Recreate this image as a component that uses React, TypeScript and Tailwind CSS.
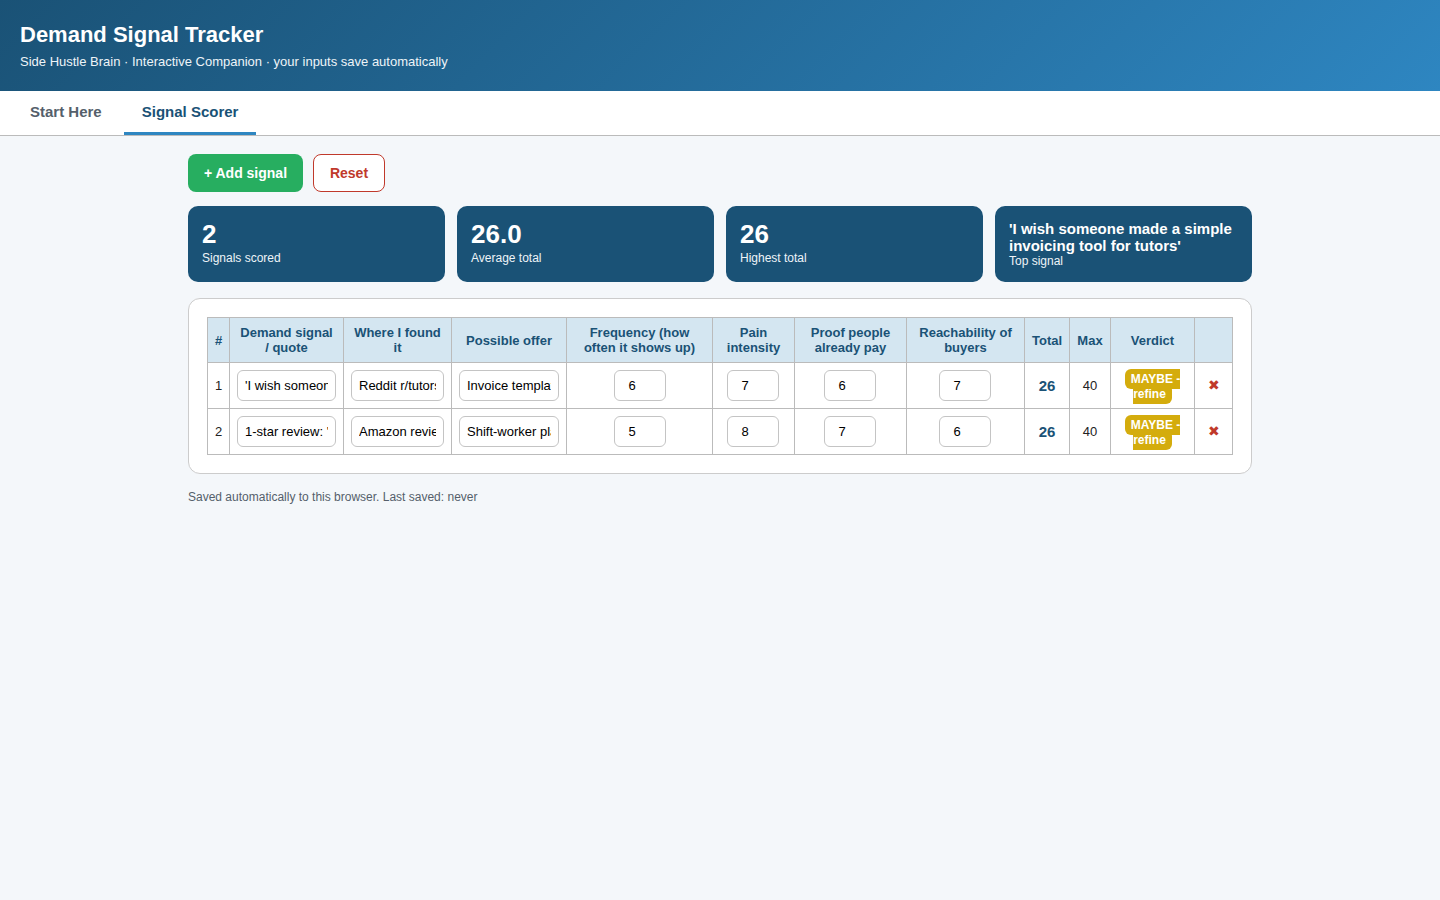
import React, { useState } from 'react';

const rows = [
  { id: 1, signal: "'I wish someone made a simple invoicing tool for tutors'", where: 'Reddit r/tutors', offer: 'Invoice template pack', freq: 6, pain: 7, proof: 6, reach: 7 },
  { id: 2, signal: "1-star review: 'Nothing works with rotating shifts'", where: 'Amazon reviews', offer: 'Shift-worker planner', freq: 5, pain: 8, proof: 7, reach: 6 },
];

const th = 'border border-[#bbbbbb] bg-[#d4e6f1] px-[7px] py-[7px] text-center align-middle text-[13px] font-bold leading-[15px] text-[#1a5276]';
const cell = 'border border-[#bbbbbb] text-center align-middle leading-[15px]';
const td = `${cell} px-[7px] py-[7px] text-[13px]`;
const tdNudged = `${cell} py-[7px] pl-[6px] pr-[8px] text-[13px]`;
const textInput = 'block h-[31px] w-full rounded-md border border-[#c4c4c4] bg-white px-[7px] text-[13px] text-black';
const numInput = 'mx-auto block h-[31px] w-[52px] rounded-md border border-[#c4c4c4] bg-white px-2 text-center text-[13px] text-black';

function Stat({ value, label, small }: { value: string; label: string; small?: boolean }) {
  return (
    <div className="h-[76px] rounded-[10px] bg-[#1a5276] px-3.5 pt-3.5 text-white">
      <div className={small ? 'text-[15px] font-bold leading-[17px]' : 'mb-[3px] text-[26px] font-bold leading-[28px]'}>{value}</div>
      <div className="text-xs leading-[14px] text-[#eef4f8]">{label}</div>
    </div>
  );
}

export default function App() {
  const [tab, setTab] = useState<'start' | 'scorer'>('scorer');

  return (
    <div className="min-h-screen bg-[#f4f7fa] font-['Liberation_Sans',Arial,sans-serif] text-[#222222]">
      {/* Header */}
      <header className="h-[91px] bg-linear-135 from-[#1a5276] to-[#2e86c1] px-5 pt-[22px] text-white">
        <h1 className="text-[22px] font-bold leading-[26px]">Demand Signal Tracker</h1>
        <p className="mt-[6px] text-[13px] leading-[15px] text-[#eef4f8]">Side Hustle Brain · Interactive Companion · your inputs save automatically</p>
      </header>

      {/* Tabs */}
      <nav className="flex h-[45px] gap-1 border-b border-[#bbbbbb] bg-white pl-3">
        <button
          onClick={() => setTab('start')}
          className={`h-[44px] border-b-[3px] px-[18px] pt-[1px] text-[15px] font-bold ${tab === 'start' ? 'border-[#2e86c1] text-[#1a5276]' : 'border-transparent text-[#555f6b]'}`}
        >
          Start Here
        </button>
        <button
          onClick={() => setTab('scorer')}
          className={`h-[44px] border-b-[3px] px-[18px] pt-[1px] text-[15px] font-bold ${tab === 'scorer' ? 'border-[#2e86c1] text-[#1a5276]' : 'border-transparent text-[#555f6b]'}`}
        >
          Signal Scorer
        </button>
      </nav>

      <main className="mx-auto w-[1064px] pt-[18px]">
        <div className="flex gap-2.5">
          <button className="h-[38px] w-[115px] rounded-lg bg-[#27ae60] text-sm font-bold text-white">+ Add signal</button>
          <button className="h-[38px] w-[72px] rounded-lg border border-[#c0392b] bg-white text-sm font-bold text-[#c0392b]">Reset</button>
        </div>

        {/* Stats */}
        <div className="mt-3.5 grid grid-cols-4 gap-3">
          <Stat value="2" label="Signals scored" />
          <Stat value="26.0" label="Average total" />
          <Stat value="26" label="Highest total" />
          <Stat small value="'I wish someone made a simple invoicing tool for tutors'" label="Top signal" />
        </div>

        {/* Scorer table */}
        <div className="mt-4 rounded-xl border border-[#cccccc] bg-white p-[18px]">
          <table className="w-[1025px] table-fixed border-collapse">
            <colgroup>
              <col className="w-[22px]" />
              <col className="w-[114px]" />
              <col className="w-[108px]" />
              <col className="w-[115px]" />
              <col className="w-[146px]" />
              <col className="w-[82px]" />
              <col className="w-[112px]" />
              <col className="w-[118px]" />
              <col className="w-[45px]" />
              <col className="w-[41px]" />
              <col className="w-[84px]" />
              <col className="w-[38px]" />
            </colgroup>
            <thead>
              <tr>
                <th className={th}>#</th>
                <th className={th}>Demand signal / quote</th>
                <th className={th}>Where I found it</th>
                <th className={th}>Possible offer</th>
                <th className={th}>Frequency (how often it shows up)</th>
                <th className={th}>Pain intensity</th>
                <th className={th}>Proof people already pay</th>
                <th className={th}>Reachability of buyers</th>
                <th className={th}>Total</th>
                <th className={th}>Max</th>
                <th className={th}>Verdict</th>
                <th className={th}></th>
              </tr>
            </thead>
            <tbody>
              {rows.map((row) => (
                <tr key={row.id}>
                  <td className={td}>{row.id}</td>
                  <td className={td}><input className={textInput} defaultValue={row.signal} /></td>
                  <td className={td}><input className={textInput} defaultValue={row.where} /></td>
                  <td className={td}><input className={textInput} defaultValue={row.offer} /></td>
                  <td className={td}><input type="number" className={numInput} defaultValue={row.freq} /></td>
                  <td className={tdNudged}><input type="number" className={numInput} defaultValue={row.pain} /></td>
                  <td className={tdNudged}><input type="number" className={numInput} defaultValue={row.proof} /></td>
                  <td className={tdNudged}><input type="number" className={numInput} defaultValue={row.reach} /></td>
                  <td className={`${cell} px-[7px] py-[7px] text-[15px] font-bold text-[#1a5276]`}>26</td>
                  <td className={td}>40</td>
                  <td className={`${cell} px-[7px] pb-[6px] pt-[8px] text-xs`}>
                    <span className="rounded-md bg-[#d4ac0d] px-[6px] py-[3px] font-bold text-white">MAYBE - refine</span>
                  </td>
                  <td className={td}>
                    <button className="block w-full text-sm leading-[15px] text-[#c0392b]">✖</button>
                  </td>
                </tr>
              ))}
            </tbody>
          </table>
        </div>

        <p className="mt-4 text-xs leading-[14px] text-[#555f6b]">Saved automatically to this browser. Last saved: never</p>
      </main>
    </div>
  );
}
